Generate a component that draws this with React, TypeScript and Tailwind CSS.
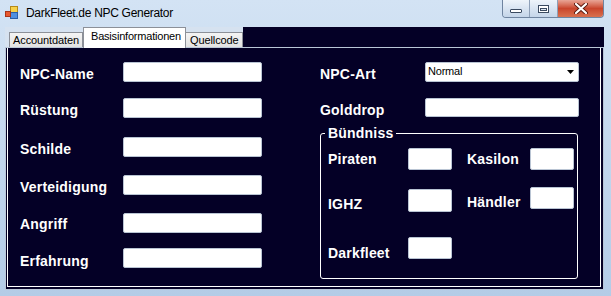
import React from 'react';

const Field: React.FC<{ className: string }> = ({ className }) => (
  <div className={`rounded-[2px] border border-[#b9c4d3] bg-white ${className}`} />
);

const Label: React.FC<{ text: string; className?: string }> = ({ text, className = '' }) => (
  <span className={`text-[14px] leading-[16px] font-bold tracking-[0.2px] text-white ${className}`}>{text}</span>
);

const AppIcon = () => (
  <svg width="13" height="13" viewBox="0 0 13 13">
    <rect x="5.5" y="0.5" width="7" height="6" fill="#f7d24a" stroke="#b58a1a" />
    <rect x="5.5" y="6.5" width="7" height="6" fill="#4f8fe0" stroke="#2a5ea8" />
    <rect x="0.5" y="5.5" width="5" height="5" fill="#e8582e" stroke="#a8341a" />
  </svg>
);

const App: React.FC = () => {
  return (
    <div className="flex h-[296px] w-[611px] flex-col overflow-hidden bg-gradient-to-b from-[#d3e3f4] to-[#b4cce7] font-['Liberation_Sans',Arial,sans-serif]">
      {/* Title bar */}
      <div className="flex h-[27px] shrink-0 justify-between">
        <div className="flex items-start pl-[5px] pt-[6px]">
          <AppIcon />
          <span className="ml-[8px] mt-[1px] text-[12px] leading-[13px] tracking-[-0.3px] text-black">
            DarkFleet.de NPC Generator
          </span>
        </div>
        <div className="mr-[7px] flex h-[18px] overflow-hidden rounded-b-[4px] border border-t-0 border-[#6f84a0]">
          <div className="flex w-[27px] items-center justify-center border-r border-[#8ea0b8] bg-gradient-to-b from-[#eef4fa] to-[#c4d5e9]">
            <div className="mt-[4px] h-[4px] w-[12px] rounded-[1px] border border-[#3a4a60] bg-white" />
          </div>
          <div className="flex w-[28px] items-center justify-center border-r border-[#8ea0b8] bg-gradient-to-b from-[#eef4fa] to-[#c4d5e9]">
            <div className="h-[8px] w-[11px] border border-[#3a4a60] bg-white p-[1px] pt-[2px]">
              <div className="h-full w-full border border-[#3a4a60] bg-[#dde7f2]" />
            </div>
          </div>
          <div className="flex w-[45px] items-center justify-center bg-gradient-to-b from-[#e8a596] via-[#c9452c] to-[#d9704f]">
            <svg width="14" height="11" viewBox="0 0 14 11">
              <path d="M2 1 L12 10 M12 1 L2 10" stroke="#5a1a10" strokeWidth="4" strokeLinecap="round" />
              <path d="M2 1 L12 10 M12 1 L2 10" stroke="#ffffff" strokeWidth="2.2" strokeLinecap="round" />
            </svg>
          </div>
        </div>
      </div>

      {/* Client area */}
      <div className="ml-[5px] mr-[7px] mb-[6px] flex flex-1 flex-col">
        {/* Tab strip */}
        <div className="flex h-[20px] shrink-0">
          <div className="flex items-end bg-[#d6e2f0] pl-[4px]">
            <div className="flex h-[15px] w-[74px] items-center border border-b-0 border-[#8c9098] bg-gradient-to-b from-[#f4f4f4] to-[#e2e2e2] pl-[3px] text-[11px] leading-[12px] tracking-[-0.1px] text-black">
              Accountdaten
            </div>
            <div className="relative z-10 -mb-[1px] flex h-[21px] w-[103px] items-start border border-b-0 border-[#8c9098] bg-white pl-[7px] pt-[2px] text-[11px] leading-[12px] tracking-[-0.2px] text-black">
              Basisinformationen
            </div>
            <div className="flex h-[15px] w-[57px] items-center border border-b-0 border-l-0 border-[#8c9098] bg-gradient-to-b from-[#f4f4f4] to-[#e2e2e2] pl-[4px] text-[11px] leading-[12px] tracking-[-0.1px] text-black">
              Quellcode
            </div>
          </div>
          <div className="flex-1 bg-[#040026]" />
        </div>

        {/* Tab page */}
        <div className="flex flex-1 border border-[#b9c6d6] bg-[#040026] px-[1px] pb-[2px] pr-[2px]">
          <div className="flex flex-1 border border-t-0 border-white bg-[#040026] pl-[12px] pt-[14px]">
            {/* Left column */}
            <div className="flex w-[300px] flex-col">
              <div className="flex items-start">
                <Label text="NPC-Name" className="mt-[4px] w-[103px]" />
                <Field className="h-[20px] w-[139px]" />
              </div>
              <div className="mt-[16px] flex items-start">
                <Label text="Rüstung" className="mt-[4px] w-[103px]" />
                <Field className="h-[20px] w-[139px]" />
              </div>
              <div className="mt-[19px] flex items-start">
                <Label text="Schilde" className="mt-[4px] w-[103px]" />
                <Field className="h-[20px] w-[139px]" />
              </div>
              <div className="mt-[18px] flex items-start">
                <Label text="Verteidigung" className="mt-[4px] w-[103px]" />
                <Field className="h-[20px] w-[139px]" />
              </div>
              <div className="mt-[18px] flex items-start">
                <Label text="Angriff" className="mt-[3px] w-[103px]" />
                <Field className="h-[20px] w-[139px]" />
              </div>
              <div className="mt-[15px] flex items-start">
                <Label text="Erfahrung" className="mt-[5px] w-[103px]" />
                <Field className="h-[20px] w-[139px]" />
              </div>
            </div>

            {/* Right column */}
            <div className="flex flex-col">
              <div className="flex items-start">
                <Label text="NPC-Art" className="mt-[4px] w-[105px]" />
                <div className="flex h-[20px] w-[154px] items-start justify-between rounded-[2px] border border-[#b9c4d3] bg-white pl-[2px] pr-[4px]">
                  <span className="mt-[2px] text-[11px] leading-[12px] tracking-[-0.2px] text-black">Normal</span>
                  <svg className="mt-[7px]" width="7" height="4" viewBox="0 0 7 4">
                    <path d="M0 0 H7 L3.5 4 Z" fill="#000" />
                  </svg>
                </div>
              </div>
              <div className="mt-[16px] flex items-start">
                <Label text="Golddrop" className="mt-[4px] w-[105px]" />
                <Field className="h-[19px] w-[154px]" />
              </div>

              {/* Bündniss group */}
              <fieldset className="mt-[7px] w-[258px] rounded-[3px] border border-white pb-[17px] pl-[7px]">
                <legend className="-ml-[3px] px-[3px] text-[14px] leading-[16px] font-bold tracking-[0.2px] text-white">
                  Bündniss
                </legend>
                <div className="mt-[7px] flex items-start">
                  <Label text="Piraten" className="mt-[3px] w-[80px]" />
                  <Field className="h-[22px] w-[44px]" />
                  <Label text="Kasilon" className="ml-[15px] mt-[3px] w-[63px]" />
                  <Field className="h-[22px] w-[44px]" />
                </div>
                <div className="mt-[17px] flex items-start">
                  <Label text="IGHZ" className="mt-[9px] w-[80px]" />
                  <Field className="mt-[2px] h-[23px] w-[44px]" />
                  <Label text="Händler" className="ml-[15px] mt-[7px] w-[63px]" />
                  <Field className="h-[22px] w-[44px]" />
                </div>
                <div className="mt-[25px] flex items-start">
                  <Label text="Darkfleet" className="mt-[8px] w-[80px]" />
                  <Field className="h-[22px] w-[44px]" />
                </div>
              </fieldset>
            </div>
          </div>
        </div>
      </div>
    </div>
  );
};

export default App;
